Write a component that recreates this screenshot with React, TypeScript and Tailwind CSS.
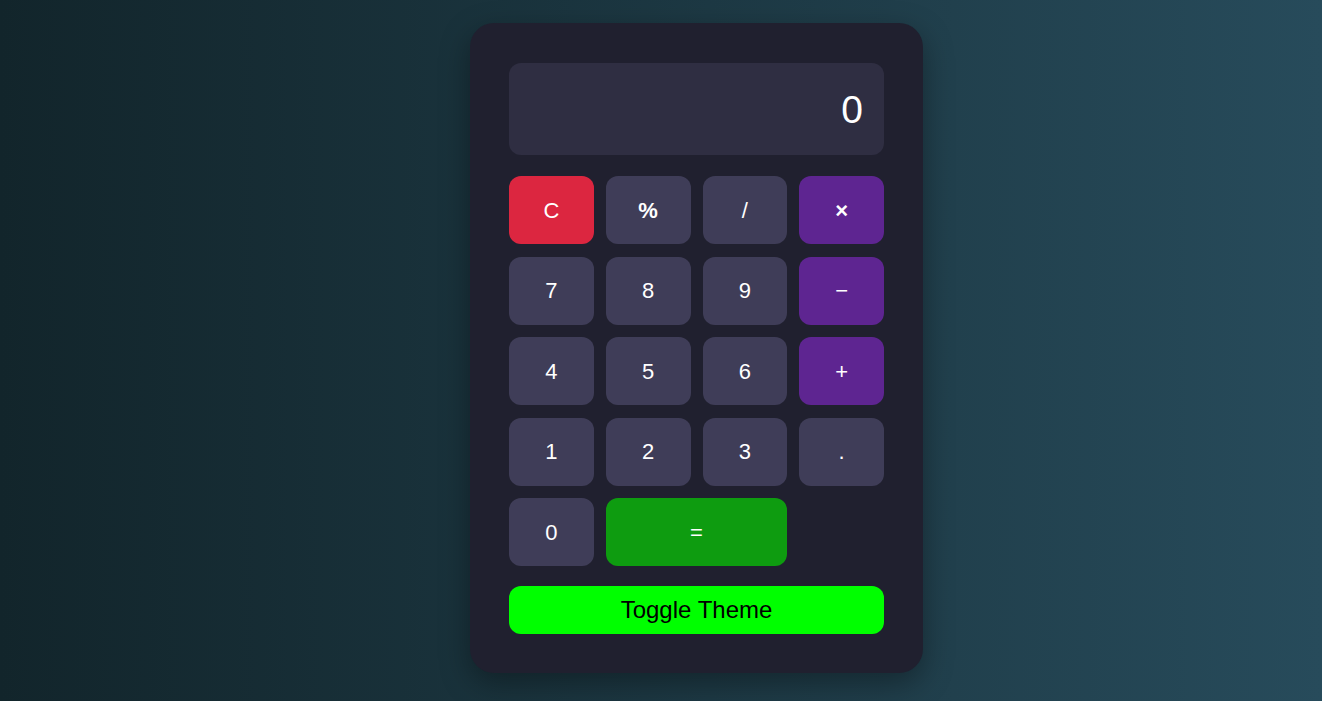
const KEYS: { label: string; kind?: "clear" | "op" | "eq"; bold?: boolean }[] = [
  { label: "C", kind: "clear" },
  { label: "%", bold: true },
  { label: "/" },
  { label: "×", kind: "op", bold: true },
  { label: "7" },
  { label: "8" },
  { label: "9" },
  { label: "−", kind: "op" },
  { label: "4" },
  { label: "5" },
  { label: "6" },
  { label: "+", kind: "op" },
  { label: "1" },
  { label: "2" },
  { label: "3" },
  { label: "." },
  { label: "0" },
  { label: "=", kind: "eq" },
];

const KIND_BG = {
  clear: "bg-[#dc2640]",
  op: "bg-[#5e2591]",
  eq: "bg-[#0e9c10] col-span-2",
};

export default function App() {
  return (
    <div className="min-h-[701px] w-full bg-gradient-to-r from-[#12252b] to-[#274b5b] font-['Liberation_Sans',Arial,sans-serif] flex justify-center pl-[71px] pt-[23px]">
      <div className="h-[650px] w-[453px] rounded-[24px] bg-[#20202f] px-[39px] pt-[40px] shadow-[0_10px_30px_rgba(0,0,0,0.35)]">
        {/* display */}
        <div className="h-[92px] rounded-[12px] bg-[#2f2e42] pl-5 pr-[21px] pt-[3px] flex items-center justify-end text-[39px] text-white">
          0
        </div>

        <div className="mt-[21px] grid grid-cols-4 gap-x-3 gap-y-[12.5px]">
          {KEYS.map((k) => (
            <button
              key={k.label}
              className={`h-[68px] rounded-[12px] text-[22px] text-white flex items-center justify-center ${
                k.kind ? KIND_BG[k.kind] : "bg-[#3f3d58]"
              } ${k.bold ? "font-bold" : ""}`}
            >
              {k.label}
            </button>
          ))}
        </div>

        <button className="mt-[20px] h-[48px] w-full rounded-[12px] bg-[#00ff00] text-[24px] text-black flex items-center justify-center">
          Toggle Theme
        </button>
      </div>
    </div>
  );
}
